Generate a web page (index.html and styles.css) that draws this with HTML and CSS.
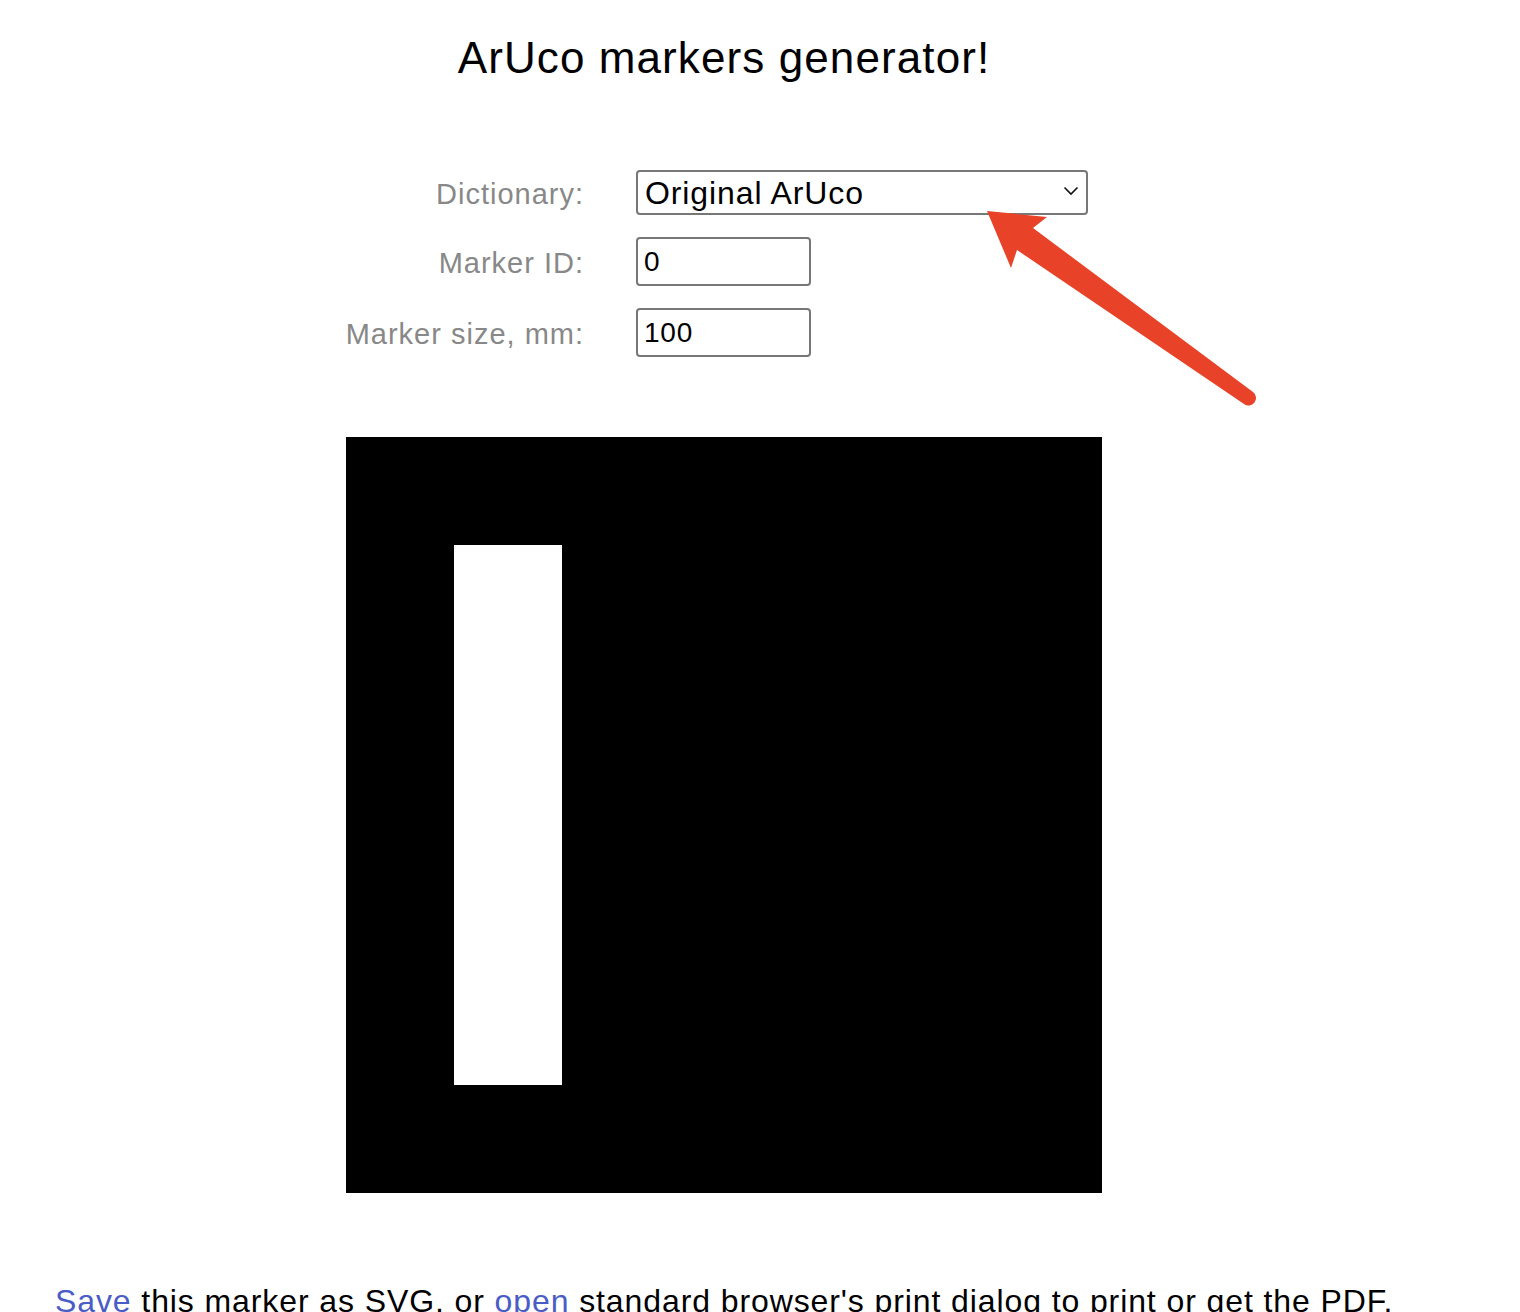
FILE: index.html
```html
<!DOCTYPE html>
<html>
<head>
<meta charset="utf-8">
<title>ArUco markers generator</title>
<link rel="stylesheet" href="styles.css">
</head>
<body>
<div class="page">
  <h1 class="title">ArUco markers generator!</h1>
  <form class="form">
    <label class="label" for="dict">Dictionary:</label>
    <div class="select-wrap">
      <select id="dict" class="select">
        <option>Original ArUco</option>
      </select>
      <svg class="chevron" width="16" height="10" viewBox="0 0 16 10"><path d="M1.5 1.5 L8 8 L14.5 1.5" fill="none" stroke="#111" stroke-width="1.6"/></svg>
    </div>
    <label class="label" for="mid">Marker ID:</label>
    <div><input id="mid" class="input" type="text" value="0"></div>
    <label class="label" for="msize">Marker size, mm:</label>
    <div><input id="msize" class="input" type="text" value="100"></div>
  </form>
  <div class="marker-wrap">
    <svg class="marker" width="756" height="756" viewBox="0 0 7 7" shape-rendering="crispEdges">
      <rect x="0" y="0" width="7" height="7" fill="#000"/>
      <rect x="1" y="1" width="1" height="5" fill="#fff"/>
    </svg>
  </div>
  <p class="note"><a href="#" class="link">Save</a> this marker as SVG, or <a href="#" class="link">open</a> standard browser's print dialog to print or get the PDF.</p>
</div>
<svg class="arrow" width="1520" height="1312" viewBox="0 0 1520 1312">
  <path d="M987 211 L1047 217 L1033 228 L1253 392 A7 7 0 0 1 1244 404 L1017 250 L1011 268 Z" fill="#e84328"/>
</svg>
</body>
</html>
```

FILE: styles.css
```css
html, body {
  margin: 0;
  padding: 0;
  background: #fff;
}
body {
  font-family: "Liberation Sans", Arial, sans-serif;
  color: #000;
  overflow: hidden;
  height: 1312px;
}
.page {
  width: 1448px;
  position: relative;
}
.title {
  margin: 33px 0 0 0;
  font-size: 44px;
  letter-spacing: 1.1px;
  line-height: 50px;
  font-weight: normal;
  text-align: center;
}
.form {
  margin: 87px 0 0 0;
  display: grid;
  grid-template-columns: 583px auto;
  column-gap: 53px;
  row-gap: 22px;
  align-items: center;
}
.label {
  text-align: right;
  color: #888;
  font-size: 29px;
  letter-spacing: 1px;
  margin-right: -1px;
  padding-top: 3px;
}
.select-wrap {
  position: relative;
  width: 452px;
  height: 45px;
}
.select {
  -webkit-appearance: none;
  appearance: none;
  width: 452px;
  height: 45px;
  box-sizing: border-box;
  border: 2px solid #777;
  border-radius: 4px;
  background: #fff;
  font-family: "Liberation Sans", Arial, sans-serif;
  font-size: 32px;
  letter-spacing: 0.9px;
  color: #000;
  padding: 0 0 0 7px;
  margin: 0;
}
.chevron {
  position: absolute;
  left: 427px;
  top: 16px;
}
.input {
  display: block;
  width: 175px;
  height: 49px;
  box-sizing: border-box;
  border: 2px solid #777;
  border-radius: 4px;
  font-family: "Liberation Sans", Arial, sans-serif;
  font-size: 28px;
  letter-spacing: 0.8px;
  color: #000;
  padding: 0 0 0 6px;
  margin: 0;
}
.marker-wrap {
  margin-top: 80px;
  display: flex;
  justify-content: center;
}
.marker {
  display: block;
}
.note {
  margin: 88px 0 0 55px;
  font-size: 32px;
  letter-spacing: 0.9px;
  line-height: 40px;
  white-space: nowrap;
}
.link {
  color: #4a5cc6;
  text-decoration: underline;
}
.arrow {
  position: absolute;
  left: 0;
  top: 0;
  pointer-events: none;
}
```
